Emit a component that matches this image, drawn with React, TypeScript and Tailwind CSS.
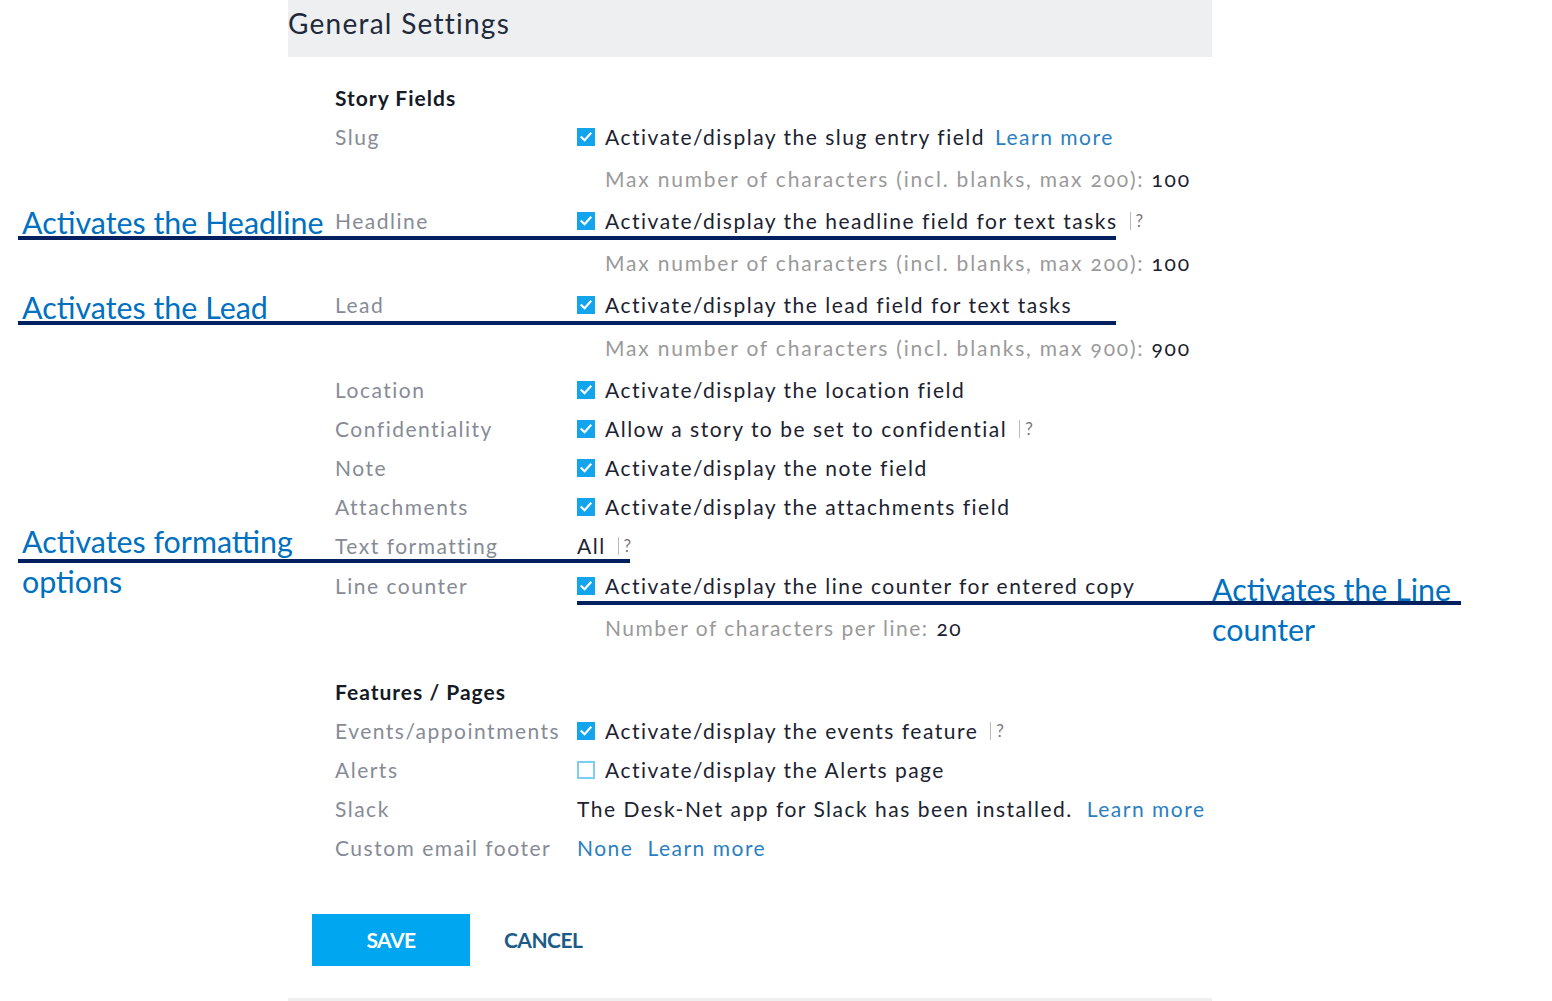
import React from "react";

const body = { fontFamily: "Lato, 'Open Sans', sans-serif" };
const note = { fontFamily: "Lato, 'Open Sans', sans-serif" };

function Check({ on = true }: { on?: boolean }) {
  if (!on) {
    return <span className="inline-block w-[18px] h-[18px] border-2 border-[#7fcdf5] bg-white shrink-0" />;
  }
  return (
    <span className="inline-flex items-center justify-center w-[18px] h-[18px] bg-[#13a4ee] shrink-0">
      <svg width="14" height="14" viewBox="0 0 14 14">
        <path d="M2.5 7.2 L5.6 10.2 L11.5 3.6" stroke="white" strokeWidth="2.2" fill="none" strokeLinecap="square" />
      </svg>
    </span>
  );
}

function Help() {
  return (
    <span className="ml-[12px] inline-flex items-center text-[17px] tracking-normal text-[#777]">
      <span className="inline-block w-px h-[18px] bg-[#bbb] mr-[5px]" />?
    </span>
  );
}

function Row({ label, h = "h-[39px]", children }: { label?: string; h?: string; children: React.ReactNode }) {
  return (
    <div className={`grid grid-cols-[242px_1fr] items-center ${h}`}>
      <div className="text-[#868b96]">{label}</div>
      <div className="flex items-center text-[#1c2230]">{children}</div>
    </div>
  );
}

function CheckRow({ label, text, on = true, help = false, extra, h }: { label: string; text: string; on?: boolean; help?: boolean; extra?: React.ReactNode; h?: string }) {
  return (
    <Row label={label} h={h}>
      <Check on={on} />
      <span className="ml-[10px]">{text}</span>
      {help && <Help />}
      {extra}
    </Row>
  );
}

function MaxRow({ text, value }: { text: string; value: string }) {
  return (
    <Row h="h-[45px]">
      <span className="ml-[28px] text-[#9a9a9a] tracking-[1.8px]">{text}</span>
      <span className="ml-[7px] text-[#1c2230] tracking-[1.8px]">{value}</span>
    </Row>
  );
}

export default function App() {
  return (
    <div className="relative w-[1552px] h-[1001px] bg-white overflow-hidden oldstyle-nums" style={body}>
      <div className="ml-[288px] w-[924px] h-full flex flex-col">
        <div className="h-[57px] bg-[#eeeff1] flex items-center text-[28px] tracking-[1.25px] text-[#1f2a3a] leading-none pb-[12px]">General Settings</div>

        <div className="pl-[47px] pt-[21px] text-[21px] tracking-[1.5px]">
          <div className="h-[39px] flex items-center font-bold tracking-[1px] text-[#151b26]">Story Fields</div>
          <CheckRow
            label="Slug"
            text="Activate/display the slug entry field"
            extra={<a className="ml-[10px] text-[#2a7fc1]">Learn more</a>}
          />
          <MaxRow text="Max number of characters (incl. blanks, max 200):" value="100" />
          <CheckRow label="Headline" text="Activate/display the headline field for text tasks" help />
          <MaxRow text="Max number of characters (incl. blanks, max 200):" value="100" />
          <CheckRow label="Lead" text="Activate/display the lead field for text tasks" h="h-[40px]" />
          <MaxRow text="Max number of characters (incl. blanks, max 900):" value="900" />
          <CheckRow label="Location" text="Activate/display the location field" />
          <CheckRow label="Confidentiality" text="Allow a story to be set to confidential" help />
          <CheckRow label="Note" text="Activate/display the note field" />
          <CheckRow label="Attachments" text="Activate/display the attachments field" />
          <Row label="Text formatting" h="h-[40px]">
            <span>All</span>
            <Help />
          </Row>
          <CheckRow label="Line counter" text="Activate/display the line counter for entered copy" />
          <Row h="h-[45px]">
            <span className="ml-[28px] text-[#9a9a9a]">Number of characters per line:</span>
            <span className="ml-[8px] text-[#1c2230]">20</span>
          </Row>

          <div className="h-[39px] mt-[22px] flex items-center font-bold tracking-[1px] text-[#151b26]">Features / Pages</div>
          <CheckRow label="Events/appointments" text="Activate/display the events feature" help />
          <CheckRow label="Alerts" text="Activate/display the Alerts page" on={false} />
          <Row label="Slack">
            <span>The Desk-Net app for Slack has been installed.</span>
            <a className="ml-[14px] text-[#2a7fc1]">Learn more</a>
          </Row>
          <Row label="Custom email footer">
            <a className="text-[#2a7fc1]">None</a>
            <a className="ml-[14px] text-[#2a7fc1]">Learn more</a>
          </Row>
        </div>

        <div className="mt-[47px] ml-[24px] flex items-center">
          <button className="w-[158px] h-[52px] bg-[#00a6ef] text-white font-bold text-[21px] tracking-tight">SAVE</button>
          <button className="ml-[34px] text-[#1b5b88] font-bold text-[21px] tracking-tight">CANCEL</button>
        </div>

        <div className="mt-auto h-[3px] bg-[#efefef]" />
      </div>

      {/* callouts */}
      <div className="absolute left-[18px] top-[236px] w-[1098px] h-[4px] bg-[#002060]" />
      <div className="absolute left-[22px] top-[207px] text-[30.4px] leading-none text-[#0070c0]" style={note}>Activates the Headline</div>

      <div className="absolute left-[18px] top-[321px] w-[1098px] h-[4px] bg-[#002060]" />
      <div className="absolute left-[22px] top-[292px] text-[30.4px] leading-none text-[#0070c0]" style={note}>Activates the Lead</div>

      <div className="absolute left-[18px] top-[559px] w-[612px] h-[4px] bg-[#002060]" />
      <div className="absolute left-[22px] top-[521px] text-[30.4px] leading-[40px] text-[#0070c0]" style={note}>Activates formatting<br />options</div>

      <div className="absolute left-[577px] top-[601px] w-[884px] h-[4px] bg-[#002060]" />
      <div className="absolute left-[1212px] top-[569px] text-[30.4px] leading-[40px] text-[#0070c0]" style={note}>Activates the Line<br />counter</div>
    </div>
  );
}
